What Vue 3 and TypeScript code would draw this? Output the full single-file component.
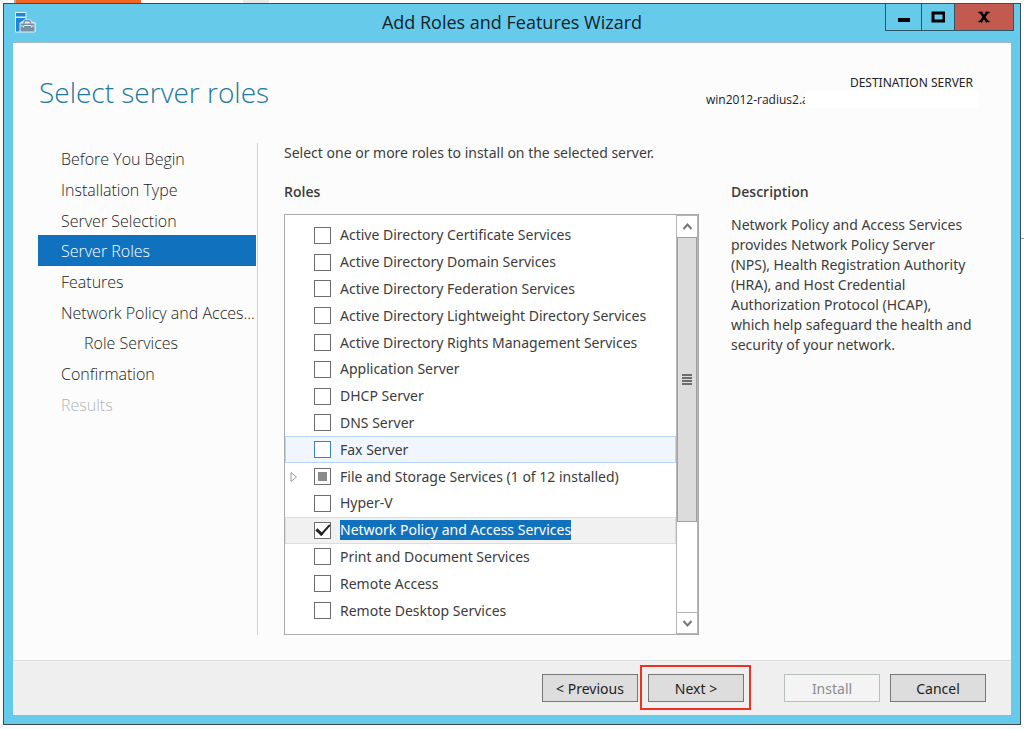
<script setup lang="ts">
import { ref } from 'vue'

interface Step {
  label: string
  state?: 'current' | 'disabled'
  nested?: boolean
}

interface Role {
  id: string
  label: string
  checked?: boolean
  partial?: boolean
  hovered?: boolean
  selected?: boolean
}

const steps: Step[] = [
  { label: 'Before You Begin' },
  { label: 'Installation Type' },
  { label: 'Server Selection' },
  { label: 'Server Roles', state: 'current' },
  { label: 'Features' },
  { label: 'Network Policy and Acces...' },
  { label: 'Role Services', nested: true },
  { label: 'Confirmation' },
  { label: 'Results', state: 'disabled' },
]

const roles = ref<Role[]>([
  { id: 'adcs', label: 'Active Directory Certificate Services' },
  { id: 'adds', label: 'Active Directory Domain Services' },
  { id: 'adfs', label: 'Active Directory Federation Services' },
  { id: 'adlds', label: 'Active Directory Lightweight Directory Services' },
  { id: 'adrms', label: 'Active Directory Rights Management Services' },
  { id: 'app', label: 'Application Server' },
  { id: 'dhcp', label: 'DHCP Server' },
  { id: 'dns', label: 'DNS Server' },
  { id: 'fax', label: 'Fax Server', hovered: true },
  { id: 'files', label: 'File and Storage Services (1 of 12 installed)', partial: true },
  { id: 'hyperv', label: 'Hyper-V' },
  { id: 'npas', label: 'Network Policy and Access Services', checked: true, selected: true },
  { id: 'print', label: 'Print and Document Services' },
  { id: 'remote', label: 'Remote Access' },
  { id: 'rds', label: 'Remote Desktop Services' },
])
</script>

<template>
  <div class="desktop">
    <div class="strip"><span class="strip-orange"></span><span class="strip-grey"></span></div>
    <span class="edge-line"></span>

    <div class="window">
      <header class="titlebar">
        <svg class="app-icon" viewBox="0 0 22 22" aria-hidden="true">
          <path d="M1.500 1.500h10.500v8h4l2 2h3v9.500h-19.500z" fill="#d9f1fa" stroke="#d9f1fa" stroke-linejoin="round" />
          <rect x="2" y="2" width="9.500" height="3.500" fill="#1c86d8" />
          <path d="M2 7h9.500v2l-5 2v9.500h-4.500z" fill="#1c86d8" />
          <path d="M5.500 12 8 11 10 8.500h6.500l2 2.500 3 1v9h-16z" fill="#d9f1fa" />
          <path d="M6.500 12.500h14v8h-14z" fill="#7890a4" />
          <path d="M10 12.500v-1.500l1-1.200h4.500l1 1.200v1.500" fill="none" stroke="#7890a4" stroke-width="1.500" />
          <path d="M7 15h2.500v1.500M20 15h-2.500v1.500M10 14.500h7" fill="none" stroke="#e3edf3" />
        </svg>
        <h1 class="window-title">Add Roles and Features Wizard</h1>
        <div class="window-controls">
          <button class="control minimize" type="button" aria-label="Minimize">
            <svg width="14" height="14" viewBox="0 0 14 14"><path d="M1 8h12v4H1z" fill="#000" /></svg>
          </button>
          <button class="control maximize" type="button" aria-label="Maximize">
            <svg width="14" height="14" viewBox="0 0 14 14"><path d="M2 3h11v8H2z" fill="none" stroke="#000" stroke-width="3" /></svg>
          </button>
          <button class="control close" type="button" aria-label="Close">
            <svg width="14" height="14" viewBox="0 0 14 14">
              <path d="M3.500 2 10.500 12M10.500 2 3.500 12" stroke="#000" stroke-width="2.500" />
              <path d="M1.500 2.500h4M8.500 2.500h4M1.500 11.500h4M8.500 11.500h4" stroke="#000" stroke-width="1.500" />
            </svg>
          </button>
        </div>
      </header>

      <main class="client">
        <div class="heading">
          <h2 class="page-title">Select server roles</h2>
          <div class="destination">
            <span class="destination-label">DESTINATION SERVER</span>
            <div class="destination-row">
              <span class="server-name">win2012-radius2.a</span>
              <span class="server-mask"></span>
            </div>
          </div>
        </div>

        <div class="body">
          <nav class="steps" aria-label="Wizard steps">
            <ul class="step-list">
              <li v-for="step in steps" :key="step.label" class="step" :class="[step.state, { nested: step.nested }]">
                <a class="step-link" href="#">{{ step.label }}</a>
              </li>
            </ul>
          </nav>

          <section class="content">
            <p class="intro">Select one or more roles to install on the selected server.</p>
            <h3 class="subhead">Roles</h3>
            <div class="listbox">
              <ul class="roles">
                <li
                  v-for="role in roles"
                  :key="role.id"
                  class="role"
                  :class="{ hovered: role.hovered, selected: role.selected }"
                >
                  <span class="expander">
                    <svg v-if="role.partial" width="9" height="12" viewBox="0 0 9 12" aria-hidden="true">
                      <path d="M2 1.500v9L7.500 6z" fill="#fff" stroke="#999" />
                    </svg>
                  </span>
                  <input
                    :id="role.id"
                    v-model="role.checked"
                    class="check"
                    type="checkbox"
                    :indeterminate="role.partial"
                  />
                  <label class="role-label" :for="role.id">{{ role.label }}</label>
                </li>
              </ul>
              <div class="scrollbar">
                <button class="scroll-button" type="button" aria-label="Scroll up">
                  <svg width="11" height="9" viewBox="0 0 11 9"><path d="M1.500 7 5.500 2.500 9.500 7" fill="none" stroke="#777" stroke-width="2" /></svg>
                </button>
                <div class="track">
                  <div class="thumb">
                    <svg width="10" height="11" viewBox="0 0 10 11"><path d="M0 0h10v2H0zM0 3h10v2H0zM0 6h10v2H0zM0 9h10v2H0z" fill="#6c6c6c" /></svg>
                  </div>
                </div>
                <button class="scroll-button down" type="button" aria-label="Scroll down">
                  <svg width="11" height="9" viewBox="0 0 11 9"><path d="M1.500 2 5.500 6.500 9.500 2" fill="none" stroke="#777" stroke-width="2" /></svg>
                </button>
              </div>
            </div>
          </section>

          <aside class="description">
            <h3 class="subhead">Description</h3>
            <p class="description-text">
              Network Policy and Access Services provides Network Policy Server (NPS), Health Registration Authority
              (HRA), and Host Credential Authorization Protocol (HCAP),<br />
              which help safeguard the health and security of your network.
            </p>
          </aside>
        </div>

        <footer class="actions">
          <button class="action" type="button">&lt; Previous</button>
          <span class="callout"><button class="action" type="button">Next &gt;</button></span>
          <button class="action install" type="button" disabled>Install</button>
          <button class="action" type="button">Cancel</button>
        </footer>
      </main>
    </div>
  </div>
</template>

<style>
body {
  margin: 0;
  background: #fbfbfb;
}
</style>

<style scoped>
* {
  box-sizing: border-box;
}

.desktop {
  position: relative;
  display: flex;
  flex-direction: column;
  min-height: 100vh;
  padding: 0 3px 4px;
  font-family: "Noto Sans", "Open Sans", sans-serif;
  font-size: 14px;
  color: #3c3c3c;
}

h1,
h2,
h3,
p,
ul {
  margin: 0;
  padding: 0;
}

ul {
  list-style: none;
}

button {
  padding: 0;
  font: inherit;
}

.strip {
  display: flex;
  gap: 102px;
  height: 3px;
  padding-left: 11px;
}

.strip-orange {
  width: 127px;
  border-left: 2px solid #aaa;
  background: #f26522;
}

.strip-grey {
  width: 26px;
  background: #e9e9e9;
}

.edge-line {
  position: absolute;
  top: 238px;
  right: 0;
  width: 3px;
  height: 1px;
  background: #999;
}

.window {
  display: flex;
  flex: 1;
  flex-direction: column;
  padding: 0 9px 9px;
  border: 1px solid #3e4a50;
  background: #66caea;
}

.titlebar {
  position: relative;
  display: flex;
  align-items: center;
  justify-content: center;
  height: 38px;
  padding-bottom: 2px;
}

.app-icon {
  position: absolute;
  top: 7px;
  left: 1px;
  width: 22px;
  height: 22px;
}

.window-title {
  font-family: "Open Sans", "Noto Sans", sans-serif;
  font-size: 18px;
  font-weight: 400;
  line-height: 36px;
  color: #10242c;
}

.window-controls {
  position: absolute;
  top: -1px;
  right: -3px;
  display: flex;
  height: 28px;
  border: 1px solid #2d5562;
}

.control {
  display: flex;
  align-items: center;
  justify-content: center;
  width: 33px;
  border: 0;
  border-left: 1px solid #2d5562;
  background: #66caea;
}

.control.minimize {
  width: 35px;
  border-left: 0;
}

.control.close {
  width: 59px;
  background: #c35a50;
}

.client {
  display: flex;
  flex: 1;
  flex-direction: column;
  border-top: 1px solid #a5b8c0;
  background: #fcfcfc;
}

.heading {
  display: flex;
  justify-content: space-between;
  height: 100px;
  padding: 31px 32px 0 26px;
}

.page-title {
  font-family: "Open Sans", "Noto Sans", sans-serif;
  font-size: 28px;
  font-weight: 300;
  line-height: 36px;
  color: #23799c;
}

.destination {
  display: flex;
  flex-direction: column;
  font-size: 12px;
  line-height: 17px;
  color: #222;
}

.destination-label {
  padding-right: 6px;
  text-align: right;
}

.destination-row {
  position: relative;
  width: 273px;
}

.server-name {
  font-family: "Open Sans", "Noto Sans", sans-serif;
  white-space: nowrap;
}

.server-mask {
  position: absolute;
  inset: 0 0 0 99px;
  background: #fff;
}

.body {
  display: flex;
  flex: 1;
  padding: 0 26px 25px 25px;
}

.steps {
  width: 220px;
  padding-right: 1px;
  border-right: 1px solid #d0d0d0;
}

.step-list {
  display: grid;
  grid-auto-rows: 1fr;
  height: 276px;
}

.step {
  display: flex;
  align-items: center;
  padding-top: 2px;
  padding-left: 23px;
}

.step.nested {
  padding-left: 46px;
}

.step-link {
  font-family: "Open Sans", "Noto Sans", sans-serif;
  font-size: 16px;
  font-weight: 300;
  line-height: 20px;
  white-space: nowrap;
  text-decoration: none;
  color: #222;
}

.step.current {
  background: #1072be;
}

.step.current .step-link {
  color: #fff;
}

.step.disabled .step-link {
  color: #b4b4b4;
}

.content {
  display: flex;
  flex: 1;
  flex-direction: column;
  margin-left: 26px;
}

.intro {
  height: 39px;
  line-height: 20px;
}

.subhead {
  font-family: "Open Sans", "Noto Sans", sans-serif;
  font-size: 14px;
  font-weight: 600;
  line-height: 20px;
}

.listbox {
  display: flex;
  flex: 1;
  margin-top: 12px;
  border: 1px solid #aaa;
  background: #fff;
}

.roles {
  display: grid;
  flex: 1;
  grid-auto-rows: 1fr;
  padding: 7px 0 10px;
}

.role {
  display: flex;
  align-items: center;
  border: 1px solid transparent;
}

.role.hovered {
  border-color: #b8d6fb;
  background: #f1f6fe;
}

.role.selected {
  border-color: #dedede;
  background: #f1f1f1;
}

.expander {
  display: flex;
  width: 28px;
  padding-left: 3px;
}

.check {
  display: grid;
  place-items: center;
  width: 17px;
  height: 17px;
  margin: 0;
  border: 1px solid #6e6e6e;
  background: #fff;
  appearance: none;
}

.role.hovered .check {
  border-color: #3b83bd;
}

.check:indeterminate::before {
  width: 9px;
  height: 9px;
  background: #8a8a8a;
  content: "";
}

.check:checked::before {
  width: 11px;
  height: 6px;
  margin-bottom: 4px;
  border-bottom: 2px solid #222;
  border-left: 3px solid #222;
  transform: rotate(-48deg);
  content: "";
}

.role-label {
  margin-left: 9px;
  line-height: 20px;
  white-space: nowrap;
}

.role.selected .role-label {
  background: #1072be;
  color: #fff;
}

.scrollbar {
  display: flex;
  flex-direction: column;
  width: 22px;
  border: 1px solid #b5b5b5;
}

.scroll-button {
  display: flex;
  align-items: center;
  justify-content: center;
  height: 21px;
  border: 0;
  background: #fff;
}

.scroll-button.down {
  border-top: 1px solid #b5b5b5;
}

.track {
  flex: 1;
}

.thumb {
  display: flex;
  align-items: center;
  justify-content: center;
  height: 76%;
  border: 1px solid #a0a0a0;
  background: #dcdcdc;
}

.description {
  width: 254px;
  margin-left: 32px;
  padding-top: 39px;
}

.description-text {
  padding-right: 8px;
  margin-top: 13px;
  line-height: 20px;
}

.actions {
  display: flex;
  align-items: center;
  gap: 10px;
  justify-content: flex-end;
  height: 55px;
  padding-right: 25px;
  border-top: 1px solid #dcdcdc;
  background: #efefef;
}

.action {
  width: 96px;
  height: 28px;
  border: 1px solid #777;
  background: #ddd;
  color: #222;
}

.action.install {
  margin-left: 30px;
  border-color: #b8bebc;
  background: #f4f4f4;
  color: #8c8c8c;
}

.callout {
  position: relative;
}

.callout::after {
  position: absolute;
  inset: -9px -7px -8px -8px;
  border: 2px solid #f03022;
  pointer-events: none;
  content: "";
}
</style>
